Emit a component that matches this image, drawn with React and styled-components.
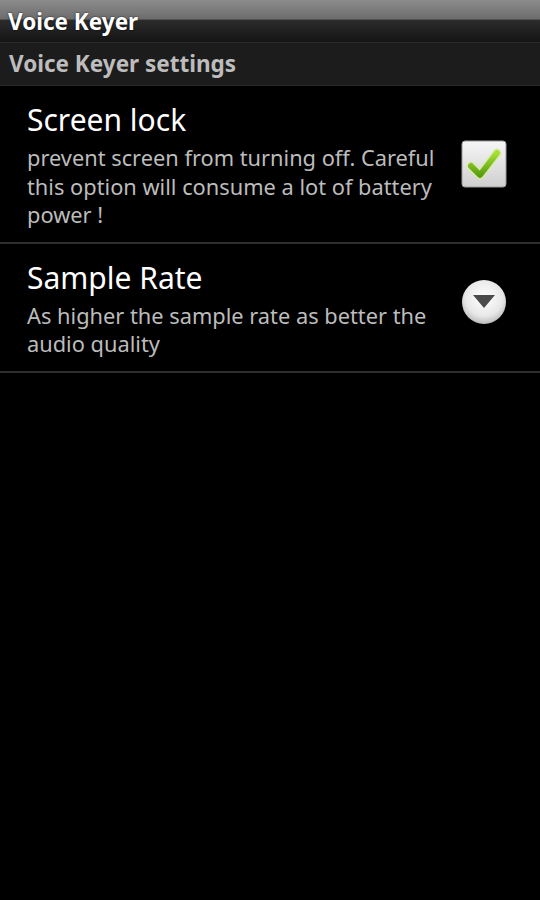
import React from "react";
import styled, { createGlobalStyle } from "styled-components";

const Global = createGlobalStyle`
  html, body { margin: 0; padding: 0; background: #000; }
  body { font-family: "Noto Sans", "Open Sans", sans-serif; }
`;

const Screen = styled.div`
  width: 540px;
  height: 900px;
  background: #000;
  display: flex;
  flex-direction: column;
  overflow: hidden;
`;

const TitleBar = styled.div`
  height: 42px;
  box-sizing: border-box;
  padding: 0 8px;
  display: flex;
  align-items: center;
  background: linear-gradient(
    to bottom,
    #8c8c8c 0%,
    #6c6c6c 46%,
    #2c2c2c 47%,
    #141414 100%
  );
  color: #fff;
  font-weight: 700;
  font-size: 22.5px;
  text-shadow: 0 0 2px rgba(0, 0, 0, 0.8);
`;

const CategoryHeader = styled.div`
  height: 44px;
  box-sizing: border-box;
  padding: 0 9px 2px;
  display: flex;
  align-items: center;
  background: #1c1c1c;
  border-top: 1px solid #2a2a2a;
  border-bottom: 1px solid #262626;
  color: #bdbdbd;
  font-weight: 700;
  font-size: 22.5px;
`;

const Row = styled.div`
  display: flex;
  align-items: center;
  padding: 16px 33px 12px 27px;
  border-bottom: 2px solid #2f2f2f;
`;

const Texts = styled.div`
  flex: 1;
  display: flex;
  flex-direction: column;
`;

const Title = styled.div`
  color: #fff;
  font-size: 30px;
  line-height: 36px;
`;

const Summary = styled.div`
  color: #bcbcbc;
  font-size: 21.8px;
  line-height: 28.5px;
  margin-top: 6px;
  max-width: ${(p) => p.$max}px;
`;

const Widget = styled.div`
  width: 46px;
  display: flex;
  justify-content: center;
  margin-left: 14px;
  margin-top: ${(p) => p.$top || 0}px;
`;

const CheckBox = () => (
  <svg width="46" height="48" viewBox="0 0 46 48">
    <defs>
      <linearGradient id="cbBg" x1="0" y1="0" x2="0" y2="1">
        <stop offset="0" stopColor="#f6f6f6" />
        <stop offset="1" stopColor="#cfcfcf" />
      </linearGradient>
      <linearGradient id="ck" x1="0" y1="0" x2="0" y2="1">
        <stop offset="0" stopColor="#a6e034" />
        <stop offset="1" stopColor="#5a9e10" />
      </linearGradient>
    </defs>
    <rect x="1" y="1" width="44" height="46" rx="3" fill="url(#cbBg)" stroke="#9a9a9a" strokeWidth="1" />
    <path
      d="M10 26 L19 35 L36 13"
      fill="none"
      stroke="#d6eca0"
      strokeWidth="9"
      strokeLinecap="round"
      strokeLinejoin="round"
      opacity="0.8"
    />
    <path
      d="M10 26 L19 35 L36 13"
      fill="none"
      stroke="url(#ck)"
      strokeWidth="6"
      strokeLinecap="round"
      strokeLinejoin="round"
    />
  </svg>
);

const DropDown = () => (
  <svg width="46" height="46" viewBox="0 0 46 46">
    <defs>
      <radialGradient id="dd" cx="0.5" cy="0.4" r="0.6">
        <stop offset="0" stopColor="#ffffff" />
        <stop offset="0.7" stopColor="#e8e8e8" />
        <stop offset="1" stopColor="#bcbcbc" />
      </radialGradient>
    </defs>
    <circle cx="23" cy="23" r="22" fill="url(#dd)" />
    <path d="M12 16 L34 16 L23 29 Z" fill="#4a4a4a" />
  </svg>
);

export default function App() {
  return (
    <>
      <Global />
      <Screen>
        <TitleBar>Voice Keyer</TitleBar>
        <CategoryHeader>Voice Keyer settings</CategoryHeader>
        <Row>
          <Texts>
            <Title>Screen lock</Title>
            <Summary $max={425}>
              prevent screen from turning off. Careful this option will consume a lot of battery power !
            </Summary>
          </Texts>
          <Widget $top={-4}>
            <CheckBox />
          </Widget>
        </Row>
        <Row>
          <Texts>
            <Title>Sample Rate</Title>
            <Summary $max={425}>
              As higher the sample rate as better the audio quality
            </Summary>
          </Texts>
          <Widget $top={-15}>
            <DropDown />
          </Widget>
        </Row>
      </Screen>
    </>
  );
}
